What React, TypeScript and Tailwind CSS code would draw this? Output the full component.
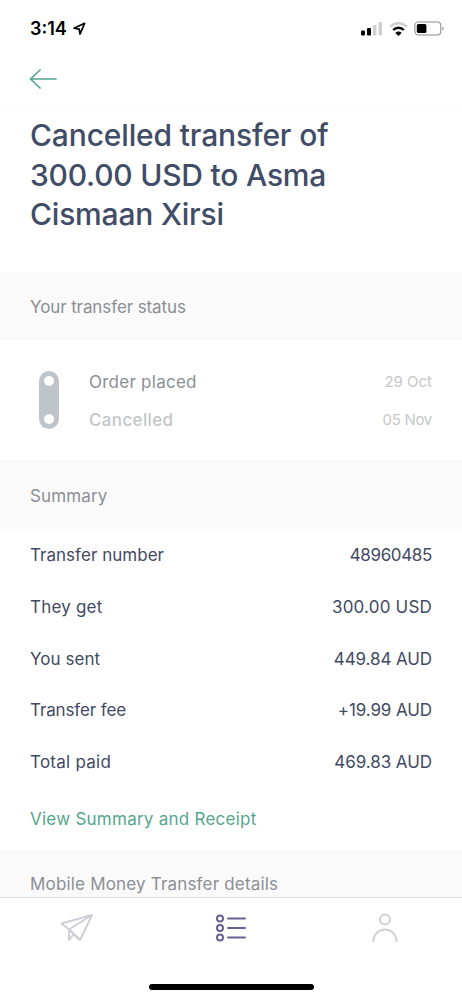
import type { ReactNode } from 'react';

const SUMMARY = [
  { label: 'Transfer number', value: '48960485', labelClass: 'tracking-[0.03px]', valueClass: 'tracking-[-0.35px]' },
  { label: 'They get', value: '300.00 USD', labelClass: 'tracking-[0.2px]', valueClass: 'tracking-[0.2px]' },
  { label: 'You sent', value: '449.84 AUD', labelClass: 'tracking-[0.05px]', valueClass: 'tracking-[-0.1px]' },
  { label: 'Transfer fee', value: '+19.99 AUD', labelClass: 'tracking-[-0.12px]', valueClass: 'tracking-[-0.1px]' },
  { label: 'Total paid', value: '469.83 AUD', labelClass: 'tracking-[0.25px]', valueClass: 'tracking-[-0.05px]' },
];

function StatusBar() {
  return (
    <div className="flex h-14 shrink-0 items-center justify-between pt-px pl-[30px] pr-[17px] text-black">
      <div className="flex items-center gap-[5px]">
        <span className="pt-px text-[18px] font-semibold leading-none">3:14</span>
        <svg width="14" height="14" viewBox="0 0 14 14" fill="none" stroke="currentColor" strokeWidth="1.7" strokeLinejoin="round">
          <path d="M12.600 1.300 2 6.200l5.200.900.800 5z" />
        </svg>
      </div>

      <div className="flex items-center gap-[6px]">
        <svg width="22" height="14" viewBox="0 0 22 14">
          <rect x="0" y="8.5" width="4" height="5" rx="1.2" />
          <rect x="6" y="6" width="4" height="7.5" rx="1.2" />
          <rect x="12" y="3" width="3.5" height="10.5" rx="1" fill="#cfcfcf" />
          <rect x="17.5" y="0" width="3.5" height="13.5" rx="1" fill="#cfcfcf" />
        </svg>
        <svg width="19" height="14" viewBox="0 0 19 14" fill="none" strokeWidth="2.4">
          <path d="M1.2 4.600a11.8 11.8 0 0 1 16.6 0" stroke="#cfcfcf" />
          <path d="M4.200 8a7.500 7.500 0 0 1 10.600 0" stroke="#000" />
          <path d="M6.300 10.900a4.600 4.600 0 0 1 6.400 0L9.500 14z" fill="#000" stroke="none" />
        </svg>
        <svg width="31" height="15" viewBox="0 0 31 15">
          <rect x="0.8" y="1" width="26" height="13" rx="3.5" fill="none" stroke="#8e8e8e" strokeWidth="1.1" />
          <rect x="2.8" y="3" width="9.6" height="9" rx="1.5" />
          <path d="M28.4 5.5c1.7.6 1.7 3.4 0 4z" fill="#8e8e8e" />
        </svg>
      </div>
    </div>
  );
}

function SectionTitle({ children, className }: { children: ReactNode; className: string }) {
  return (
    <h2 className={`flex shrink-0 items-center bg-[#fafafa] px-[30px] text-[17px] text-[#8b8f94] ${className}`}>
      {children}
    </h2>
  );
}

function TabBar() {
  return (
    <nav className="flex h-[103px] shrink-0 flex-col justify-between border-t border-[#dcdcde] bg-white pb-[10px]">
      <div className="grid grid-cols-3 pt-[13px]">
        <button className="flex justify-center">
          <svg width="34" height="34" viewBox="0 0 34 34" fill="none" stroke="#cfced6" strokeWidth="1.9" strokeLinejoin="round">
            <path d="M32 4 1.500 12.500l7.500 6L20 29z" />
            <path d="M32 4 9 18.500V29l4.500-5.500M9 18.500l11 10.500" />
          </svg>
        </button>
        <button className="flex justify-center">
          <svg width="32" height="34" viewBox="0 0 32 34" fill="none" stroke="#6a6092" strokeWidth="2" strokeLinecap="round">
            <circle cx="5" cy="7.500" r="3" />
            <circle cx="5" cy="17" r="3" />
            <circle cx="5" cy="26.500" r="3" />
            <path d="M13 7.500h17M13 17h17M13 26.500h17" />
          </svg>
        </button>
        <button className="flex justify-center">
          <svg width="28" height="34" viewBox="0 0 28 34" fill="none" stroke="#d0d0d0" strokeWidth="2">
            <circle cx="14" cy="8.500" r="5" />
            <path d="M2.500 31v-1a11.500 11.500 0 0 1 23 0v1" />
          </svg>
        </button>
      </div>
      <div className="mx-auto h-[6px] w-[165px] rounded-full bg-black" />
    </nav>
  );
}

function App() {
  return (
    <div className="flex h-[1000px] w-full flex-col overflow-hidden bg-white font-['Inter',sans-serif] text-[#434a63]">
      <StatusBar />
      <header className="flex h-[52px] shrink-0 items-center border-b border-[#fafafa] px-[29px] pb-[5px]">
        <button aria-label="Back">
          <svg width="28" height="20" viewBox="0 0 28 20" fill="none" stroke="#55a392" strokeWidth="1.7" strokeLinecap="round" strokeLinejoin="round">
            <path d="M27 10H1.500M11 1 1.500 10l9.500 9" />
          </svg>
        </button>
      </header>

      <main className="flex min-h-0 flex-1 flex-col overflow-hidden">
        <h1 className="h-[164px] shrink-0 px-[30px] pt-2 text-[30px] font-medium leading-[39.5px] text-[#414c66]">
          <span className="block tracking-[-0.15px]">Cancelled transfer of</span>
          <span className="block tracking-[-0.22px]">300.00 USD to Asma</span>
          <span className="block tracking-[-0.2px]">Cismaan Xirsi</span>
        </h1>

        <SectionTitle className="h-[68px] pt-1 tracking-[-0.1px]">Your transfer status</SectionTitle>

        <div className="flex h-[120px] shrink-0 items-center pl-[39px] pr-[30px]">
          <div className="flex h-[58px] w-5 flex-col items-center justify-between rounded-full bg-[#bfc4c9] py-[5px]">
            <span className="size-[10px] rounded-full bg-white" />
            <span className="size-[10px] rounded-full bg-white" />
          </div>
          <div className="ml-[30px] flex-1 pt-[2px] leading-[38px]">
            <div className="flex justify-between">
              <span className="text-[17px] tracking-[0.25px] text-[#8b8f94]">Order placed</span>
              <span className="text-[15px] text-[#c6c8ca]">29 Oct</span>
            </div>
            <div className="flex justify-between">
              <span className="text-[17px] font-medium tracking-[0.35px] text-[#c3c6c8]">Cancelled</span>
              <span className="text-[15px] tracking-[-0.3px] text-[#c6c8ca]">05 Nov</span>
            </div>
          </div>
        </div>

        <SectionTitle className="h-[69px] pt-1 tracking-[0.15px]">Summary</SectionTitle>

        <dl className="shrink-0 px-[30px] pt-px text-[17px] leading-[51.8px]">
          {SUMMARY.map((row) => (
            <div key={row.label} className="flex justify-between">
              <dt className={row.labelClass}>{row.label}</dt>
              <dd className={row.valueClass}>{row.value}</dd>
            </div>
          ))}
        </dl>

        <a className="block h-[61px] shrink-0 px-[30px] text-[17px] leading-[60px] tracking-[0.25px] text-[#55a68e]">
          View Summary and Receipt
        </a>

        <SectionTitle className="h-[68px] pt-[2px] tracking-[0.18px]">Mobile Money Transfer details</SectionTitle>
      </main>

      <TabBar />
    </div>
  );
}

export default App;
